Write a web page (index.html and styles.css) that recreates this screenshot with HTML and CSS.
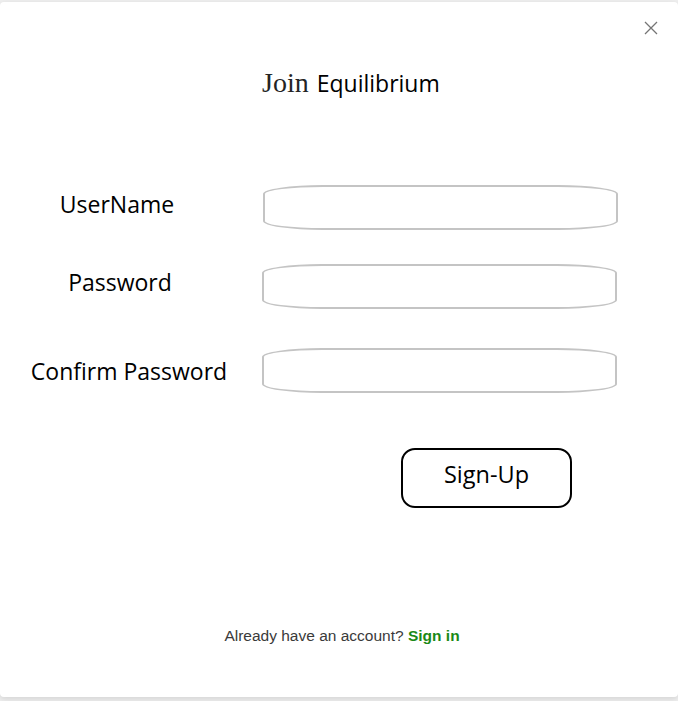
FILE: index.html
```html
<!DOCTYPE html>
<html>
<head>
<meta charset="utf-8">
<link rel="stylesheet" href="styles.css">
</head>
<body>
<div class="modal">
  <button class="close" aria-label="Close">
    <svg width="14" height="14" viewBox="0 0 14 14"><path d="M1 1 L13 13 M13 1 L1 13" stroke="#757575" stroke-width="1.3" fill="none"/></svg>
  </button>
  <h1 class="title"><span class="serif">Join</span> <span class="sans">Equilibrium</span></h1>
  <form class="form">
    <div class="row row1">
      <label class="label">UserName</label>
      <input class="field" type="text">
    </div>
    <div class="row row2">
      <label class="label">Password</label>
      <input class="field" type="password">
    </div>
    <div class="row row3">
      <label class="label">Confirm Password</label>
      <input class="field" type="password">
    </div>
    <div class="actions">
      <button type="button" class="signup">Sign-Up</button>
    </div>
  </form>
  <p class="footer">Already have an account? <a class="signin">Sign in</a></p>
</div>
</body>
</html>
```
FILE: styles.css
```css
* { box-sizing: border-box; }
html, body { margin: 0; padding: 0; }
body {
  background: #efefef;
  width: 678px;
  height: 701px;
  overflow: hidden;
  padding-top: 2px;
}
.modal {
  position: relative;
  background: #fff;
  height: 695px;
  border-radius: 4px;
  box-shadow: 0 2px 6px rgba(0,0,0,0.12);
  padding-top: 61px;
}
.close {
  position: absolute;
  top: 19px;
  right: 20px;
  border: none;
  background: none;
  padding: 0;
  width: 14px;
  height: 14px;
  display: block;
}
.close svg { display: block; }
.title {
  margin: 0 0 0 262px;
  font-weight: normal;
  height: 36px;
  line-height: 36px;
  white-space: nowrap;
}
.serif {
  font-family: "Liberation Serif", "DejaVu Serif", serif;
  font-size: 28px;
  color: #242424;
}
.sans {
  font-family: "Open Sans", sans-serif;
  font-size: 23px;
  color: #000;
}
.form {
  margin-top: 86px;
  display: flex;
  flex-direction: column;
}
.row {
  display: grid;
  grid-template-columns: 262px 355px;
  align-items: center;
  height: 45px;
}
.row2 { margin-top: 34px; }
.row3 { margin-top: 39px; }
.label {
  font-family: "Open Sans", sans-serif;
  font-size: 23px;
  color: #000;
  text-align: center;
  padding-right: 28px;
  white-space: nowrap;
}
.row1 .label { padding-right: 28px; margin-top: -8px; }
.row2 .label { padding-right: 22px; margin-top: -10px; }
.row3 .label { padding-right: 4px; }
.row1 .field { margin-left: 1px; }
.field {
  height: 45px;
  width: 355px;
  border: 2.5px solid #c4c4c4;
  border-radius: 60px / 9px;
  background: #fff;
  outline: none;
}
.actions {
  margin-top: 55px;
  padding-left: 401px;
}
.signup {
  width: 171px;
  height: 60px;
  border: 2.5px solid #000;
  border-radius: 14px;
  background: #fff;
  font-family: "Open Sans", sans-serif;
  font-size: 23.5px;
  color: #000;
  padding: 0 0 8px;
}
.footer {
  margin: 119px 0 0;
  text-align: center;
  padding-left: 6px;
  font-family: "Liberation Sans", Arial, sans-serif;
  font-size: 15.5px;
  color: #3a3a3a;
}
.signin {
  color: #1a8917;
  font-weight: bold;
}
```
